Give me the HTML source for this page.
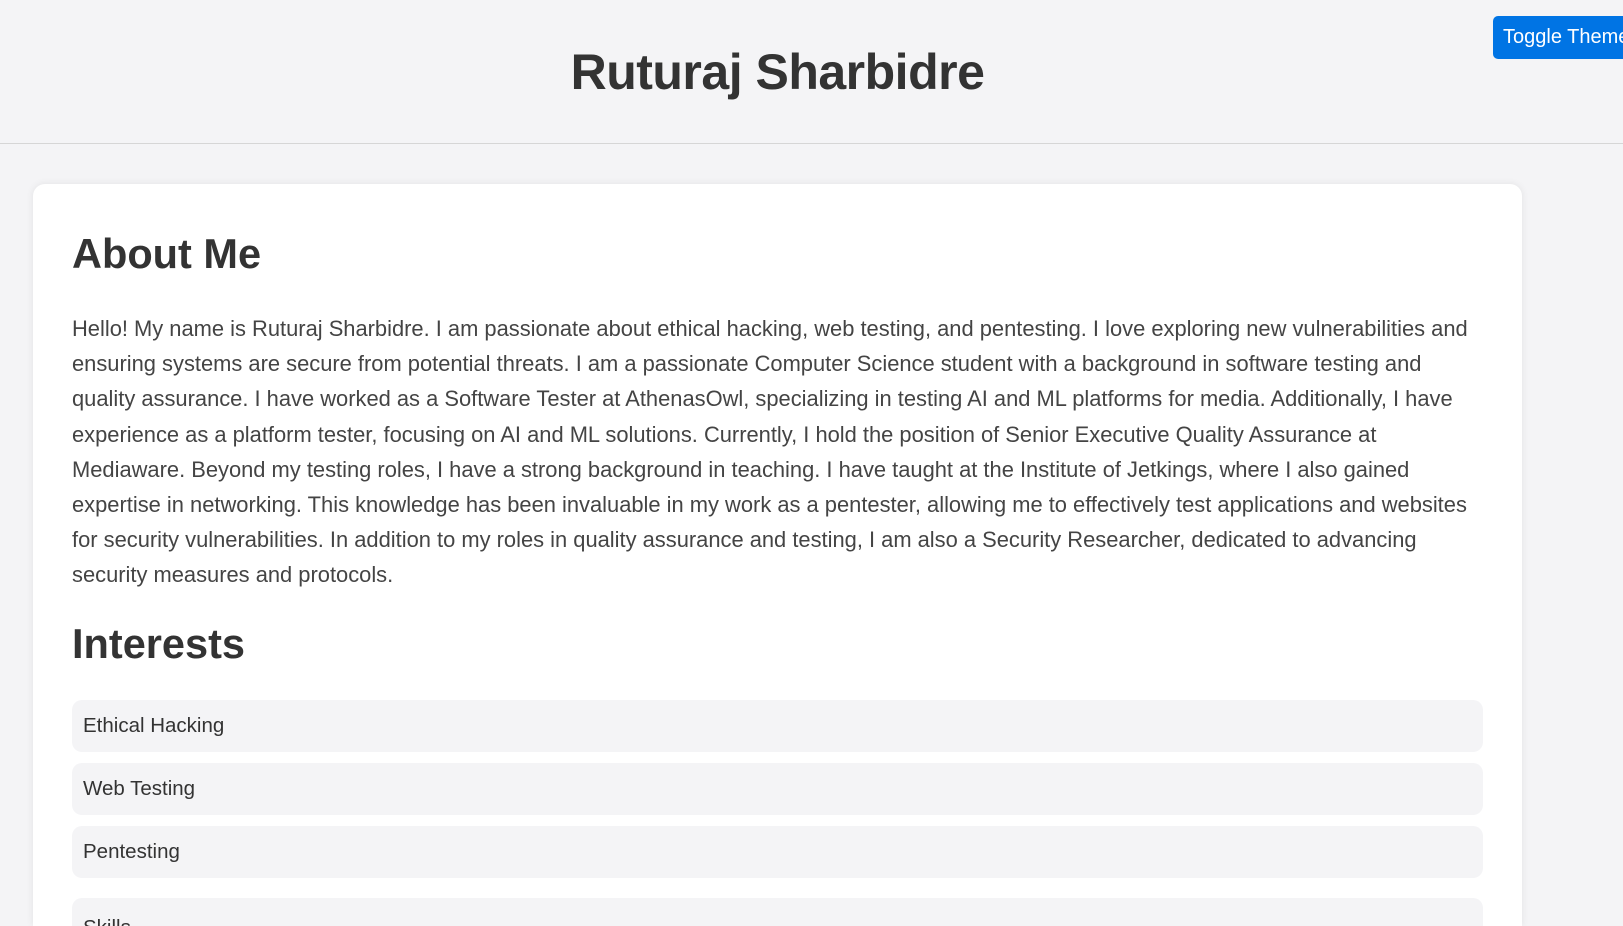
<!DOCTYPE html>
<html><head><meta charset="utf-8"><style>
*{margin:0;padding:0;box-sizing:border-box}
html,body{width:1623px;height:926px;overflow:hidden}
body{background:#f4f4f6;font-family:"Liberation Sans",sans-serif;color:#333;position:relative}
header{height:144px;border-bottom:1px solid #d6d6d6;position:relative}
h1{position:absolute;left:0;right:68px;top:43px;text-align:center;font-size:50px;font-weight:bold;color:#333;letter-spacing:-0.5px}
.btn{position:absolute;left:1493px;top:16px;width:130px;height:43px;background:#0074e4;border-radius:5px 0 0 5px;color:#fff;font-size:20px;line-height:43px;padding-left:10px;white-space:nowrap;overflow:hidden}
.card{position:absolute;left:33px;top:184px;width:1489px;height:742px;background:#fff;border-radius:12px 12px 0 0;box-shadow:0 0 8px rgba(0,0,0,0.08);overflow:hidden}
h2{position:absolute;left:39px;font-size:41.5px;font-weight:bold;color:#333}
.p{position:absolute;left:39px;top:127px;font-size:21.9px;line-height:35.2px;color:#444;white-space:nowrap}
.item{position:absolute;left:39px;width:1411px;height:52px;background:#f4f4f6;border-radius:10px;font-size:20.5px;line-height:52px;padding-left:11px;color:#333;overflow:hidden}
</style></head><body>
<header><h1>Ruturaj Sharbidre</h1><div class="btn">Toggle Theme</div></header>
<div class="card">
<h2 style="top:46px">About Me</h2>
<div class="p">Hello! My name is Ruturaj Sharbidre. I am passionate about ethical hacking, web testing, and pentesting. I love exploring new vulnerabilities and<br>ensuring systems are secure from potential threats. I am a passionate Computer Science student with a background in software testing and<br>quality assurance. I have worked as a Software Tester at AthenasOwl, specializing in testing AI and ML platforms for media. Additionally, I have<br>experience as a platform tester, focusing on AI and ML solutions. Currently, I hold the position of Senior Executive Quality Assurance at<br>Mediaware. Beyond my testing roles, I have a strong background in teaching. I have taught at the Institute of Jetkings, where I also gained<br>expertise in networking. This knowledge has been invaluable in my work as a pentester, allowing me to effectively test applications and websites<br>for security vulnerabilities. In addition to my roles in quality assurance and testing, I am also a Security Researcher, dedicated to advancing<br>security measures and protocols.</div>
<h2 style="top:436px">Interests</h2>
<div class="item" style="top:516px">Ethical Hacking</div>
<div class="item" style="top:579px">Web Testing</div>
<div class="item" style="top:642px">Pentesting</div>
<div class="item" style="top:714px;height:28px;border-radius:10px 10px 0 0;line-height:normal;padding-top:18px">Skills</div>
</div>
</body></html>
